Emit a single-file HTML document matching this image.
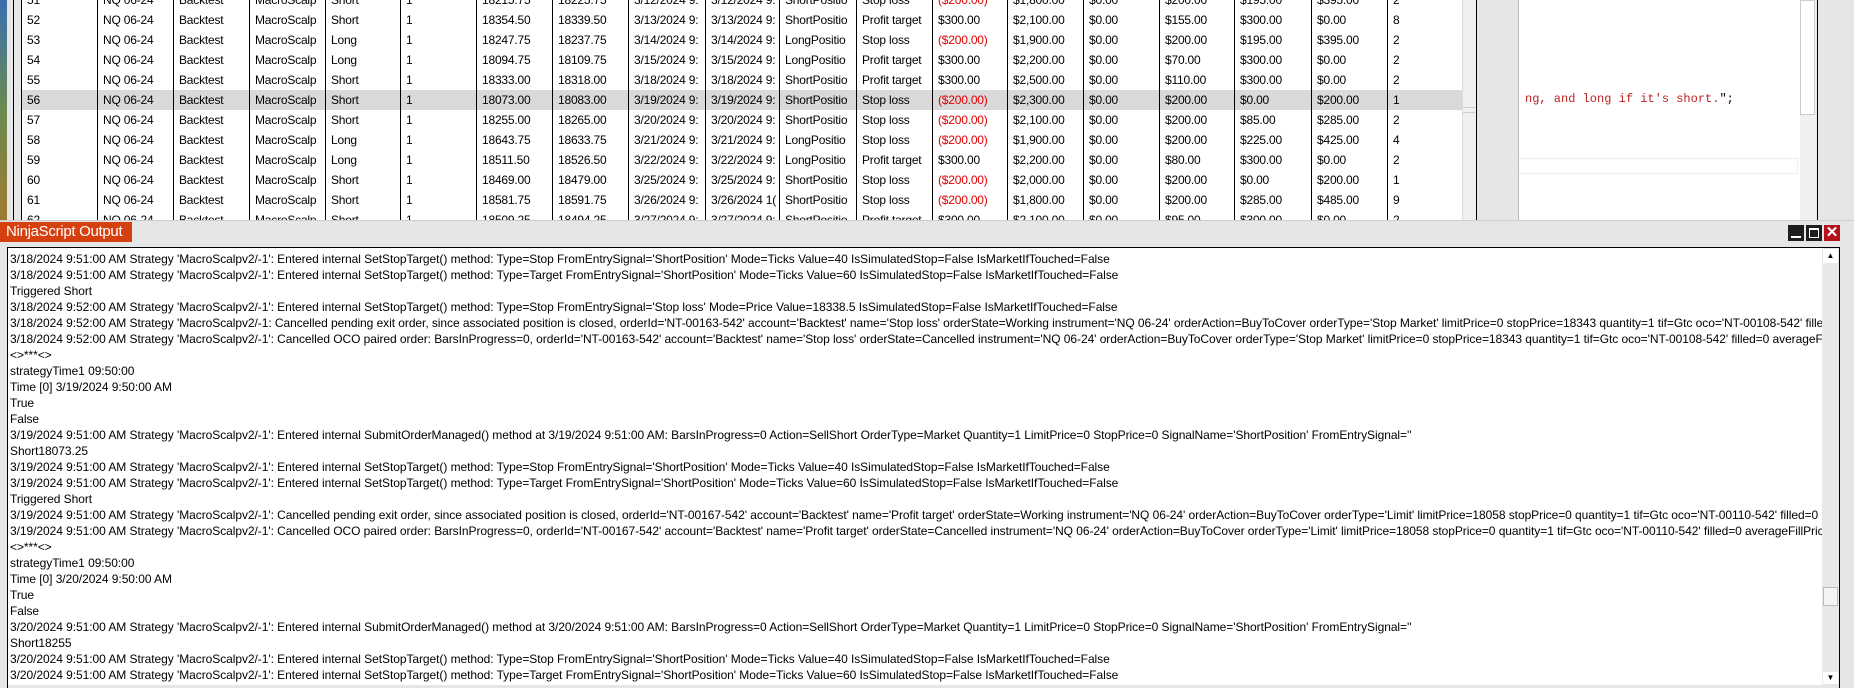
<!DOCTYPE html>
<html><head><meta charset="utf-8"><style>
*{margin:0;padding:0;box-sizing:border-box}
body{width:1854px;height:688px;overflow:hidden;background:#e6e6e6;font-family:"Liberation Sans",sans-serif;position:relative}
.abs{position:absolute}
#tbl{position:absolute;left:21px;top:0;width:1441px;height:220px;background:#fff;overflow:hidden}
.row{position:absolute;left:0;height:20px;width:1441px;font-size:12px;letter-spacing:-0.2px;line-height:20px;color:#000}
.row.sel{background:#d9d9d9}
.c{position:absolute;top:0;padding-left:6px;white-space:nowrap;overflow:hidden;height:20px}
.red{color:#e00000}
.vl{position:absolute;top:0;width:1px;height:220px;background:#000}
#out{position:absolute;left:7px;top:247px;width:1833px;height:441px;background:#fff;border:1px solid #000;border-bottom:none;overflow:hidden}
#txt{position:absolute;left:2px;top:3px;width:1812px;overflow:hidden;font-size:12px;letter-spacing:-0.06px;line-height:16px;white-space:pre;color:#000}
</style></head><body>
<div class="abs" style="left:0;top:0;width:7px;height:220px;background:linear-gradient(#3a6fb0,#6a8a50 50%,#a07a30)"></div>
<div class="abs" style="left:7px;top:0;width:7px;height:220px;background:#e6e6e6"></div>
<div class="abs" style="left:13px;top:0;width:1px;height:220px;background:#000"></div>
<div id="tbl"></div>
<div class="abs" style="left:1462px;top:0;width:14px;height:220px;background:#f0f0f0;border-left:1px solid #ddd"></div>
<div class="abs" style="left:1463px;top:107px;width:12px;height:6px;border-top:1px solid #ccc;border-bottom:1px solid #ccc"></div>
<div class="abs" style="left:1476px;top:0;width:1px;height:220px;background:#000"></div>
<div class="abs" style="left:1484px;top:0;width:35px;height:220px;background:#e6e6e6;border-right:1px solid #bbb"></div>
<div class="abs" style="left:1519px;top:0;width:281px;height:220px;background:#fff"></div>
<div class="abs" style="left:1525px;top:90px;font-family:'Liberation Mono',monospace;font-size:12px;line-height:18px;color:#b22;white-space:pre">ng, and long if it's short.<span style="color:#000">";</span></div>
<div class="abs" style="left:1519px;top:158px;width:279px;height:16px;border:1px solid #eee;border-left:none"></div>
<div class="abs" style="left:1800px;top:0;width:16px;height:220px;background:#f0f0f0"></div>
<div class="abs" style="left:1800px;top:0;width:15px;height:115px;background:#fff;border:1px solid #ccc"></div>
<div class="abs" style="left:1817px;top:0;width:1px;height:220px;background:#000"></div>
<div class="abs" style="left:0;top:220px;width:1854px;height:1px;background:#ccc"></div>
<div class="abs" style="left:0;top:222px;width:132px;height:20px;background:#d6400f;color:#fff;font-size:15px;line-height:20px;padding-left:6px;letter-spacing:-0.3px">NinjaScript Output</div>
<div class="abs" style="left:1788px;top:225px;width:16px;height:16px;background:#1e1e1e"><div class="abs" style="left:3px;top:11px;width:10px;height:2px;background:#fff"></div></div>
<div class="abs" style="left:1806px;top:225px;width:16px;height:16px;background:#1e1e1e"><div class="abs" style="left:3px;top:3px;width:10px;height:10px;border:1px solid #fff;border-top-width:2px"></div></div>
<div class="abs" style="left:1824px;top:225px;width:16px;height:16px;background:#b5121b;color:#fff;font-size:15px;font-weight:bold;line-height:16px;text-align:center">✕</div>
<div id="out"><div id="txt">3/18/2024 9:51:00 AM Strategy 'MacroScalpv2/-1': Entered internal SetStopTarget() method: Type=Stop FromEntrySignal='ShortPosition' Mode=Ticks Value=40 IsSimulatedStop=False IsMarketIfTouched=False
3/18/2024 9:51:00 AM Strategy 'MacroScalpv2/-1': Entered internal SetStopTarget() method: Type=Target FromEntrySignal='ShortPosition' Mode=Ticks Value=60 IsSimulatedStop=False IsMarketIfTouched=False
Triggered Short
3/18/2024 9:52:00 AM Strategy 'MacroScalpv2/-1': Entered internal SetStopTarget() method: Type=Stop FromEntrySignal='Stop loss' Mode=Price Value=18338.5 IsSimulatedStop=False IsMarketIfTouched=False
3/18/2024 9:52:00 AM Strategy 'MacroScalpv2/-1: Cancelled pending exit order, since associated position is closed, orderId='NT-00163-542' account='Backtest' name='Stop loss' orderState=Working instrument='NQ 06-24' orderAction=BuyToCover orderType='Stop Market' limitPrice=0 stopPrice=18343 quantity=1 tif=Gtc oco='NT-00108-542' filled=0
3/18/2024 9:52:00 AM Strategy 'MacroScalpv2/-1': Cancelled OCO paired order: BarsInProgress=0, orderId='NT-00163-542' account='Backtest' name='Stop loss' orderState=Cancelled instrument='NQ 06-24' orderAction=BuyToCover orderType='Stop Market' limitPrice=0 stopPrice=18343 quantity=1 tif=Gtc oco='NT-00108-542' filled=0 averageFillPrice=0
&lt;&gt;***&lt;&gt;
strategyTime1 09:50:00
Time [0] 3/19/2024 9:50:00 AM
True
False
3/19/2024 9:51:00 AM Strategy 'MacroScalpv2/-1': Entered internal SubmitOrderManaged() method at 3/19/2024 9:51:00 AM: BarsInProgress=0 Action=SellShort OrderType=Market Quantity=1 LimitPrice=0 StopPrice=0 SignalName='ShortPosition' FromEntrySignal=''
Short18073.25
3/19/2024 9:51:00 AM Strategy 'MacroScalpv2/-1': Entered internal SetStopTarget() method: Type=Stop FromEntrySignal='ShortPosition' Mode=Ticks Value=40 IsSimulatedStop=False IsMarketIfTouched=False
3/19/2024 9:51:00 AM Strategy 'MacroScalpv2/-1': Entered internal SetStopTarget() method: Type=Target FromEntrySignal='ShortPosition' Mode=Ticks Value=60 IsSimulatedStop=False IsMarketIfTouched=False
Triggered Short
3/19/2024 9:51:00 AM Strategy 'MacroScalpv2/-1': Cancelled pending exit order, since associated position is closed, orderId='NT-00167-542' account='Backtest' name='Profit target' orderState=Working instrument='NQ 06-24' orderAction=BuyToCover orderType='Limit' limitPrice=18058 stopPrice=0 quantity=1 tif=Gtc oco='NT-00110-542' filled=0
3/19/2024 9:51:00 AM Strategy 'MacroScalpv2/-1': Cancelled OCO paired order: BarsInProgress=0, orderId='NT-00167-542' account='Backtest' name='Profit target' orderState=Cancelled instrument='NQ 06-24' orderAction=BuyToCover orderType='Limit' limitPrice=18058 stopPrice=0 quantity=1 tif=Gtc oco='NT-00110-542' filled=0 averageFillPrice=0
&lt;&gt;***&lt;&gt;
strategyTime1 09:50:00
Time [0] 3/20/2024 9:50:00 AM
True
False
3/20/2024 9:51:00 AM Strategy 'MacroScalpv2/-1': Entered internal SubmitOrderManaged() method at 3/20/2024 9:51:00 AM: BarsInProgress=0 Action=SellShort OrderType=Market Quantity=1 LimitPrice=0 StopPrice=0 SignalName='ShortPosition' FromEntrySignal=''
Short18255
3/20/2024 9:51:00 AM Strategy 'MacroScalpv2/-1': Entered internal SetStopTarget() method: Type=Stop FromEntrySignal='ShortPosition' Mode=Ticks Value=40 IsSimulatedStop=False IsMarketIfTouched=False
3/20/2024 9:51:00 AM Strategy 'MacroScalpv2/-1': Entered internal SetStopTarget() method: Type=Target FromEntrySignal='ShortPosition' Mode=Ticks Value=60 IsSimulatedStop=False IsMarketIfTouched=False</div>
<div class="abs" style="left:1814px;top:0;width:17px;height:437px;background:#e8e8e8"></div>
<div class="abs" style="left:1815px;top:1px;width:15px;height:14px;background:#fff;font-size:8px;text-align:center;line-height:14px">▲</div>
<div class="abs" style="left:1815px;top:339px;width:15px;height:19px;background:#f4f4f4;border:1px solid #bbb"></div>
<div class="abs" style="left:1815px;top:424px;width:15px;height:12px;background:#fff;font-size:8px;text-align:center;line-height:12px">▼</div>
<div class="abs" style="left:0;top:437px;width:1833px;height:4px;background:#e6e6e6"></div>
</div>
<script>
var X=[0,76,152,228,304,379,455,531,607,684,758,835,911,986,1062,1138,1213,1290,1366];
var D=[
["51","NQ 06-24","Backtest","MacroScalp","Short","1","18215.75","18225.75","3/12/2024 9:","3/12/2024 9:","ShortPositio","Stop loss","($200.00)","$1,800.00","$0.00","$200.00","$195.00","$395.00","2"],
["52","NQ 06-24","Backtest","MacroScalp","Short","1","18354.50","18339.50","3/13/2024 9:","3/13/2024 9:","ShortPositio","Profit target","$300.00","$2,100.00","$0.00","$155.00","$300.00","$0.00","8"],
["53","NQ 06-24","Backtest","MacroScalp","Long","1","18247.75","18237.75","3/14/2024 9:","3/14/2024 9:","LongPositio","Stop loss","($200.00)","$1,900.00","$0.00","$200.00","$195.00","$395.00","2"],
["54","NQ 06-24","Backtest","MacroScalp","Long","1","18094.75","18109.75","3/15/2024 9:","3/15/2024 9:","LongPositio","Profit target","$300.00","$2,200.00","$0.00","$70.00","$300.00","$0.00","2"],
["55","NQ 06-24","Backtest","MacroScalp","Short","1","18333.00","18318.00","3/18/2024 9:","3/18/2024 9:","ShortPositio","Profit target","$300.00","$2,500.00","$0.00","$110.00","$300.00","$0.00","2"],
["56","NQ 06-24","Backtest","MacroScalp","Short","1","18073.00","18083.00","3/19/2024 9:","3/19/2024 9:","ShortPositio","Stop loss","($200.00)","$2,300.00","$0.00","$200.00","$0.00","$200.00","1"],
["57","NQ 06-24","Backtest","MacroScalp","Short","1","18255.00","18265.00","3/20/2024 9:","3/20/2024 9:","ShortPositio","Stop loss","($200.00)","$2,100.00","$0.00","$200.00","$85.00","$285.00","2"],
["58","NQ 06-24","Backtest","MacroScalp","Long","1","18643.75","18633.75","3/21/2024 9:","3/21/2024 9:","LongPositio","Stop loss","($200.00)","$1,900.00","$0.00","$200.00","$225.00","$425.00","4"],
["59","NQ 06-24","Backtest","MacroScalp","Long","1","18511.50","18526.50","3/22/2024 9:","3/22/2024 9:","LongPositio","Profit target","$300.00","$2,200.00","$0.00","$80.00","$300.00","$0.00","2"],
["60","NQ 06-24","Backtest","MacroScalp","Short","1","18469.00","18479.00","3/25/2024 9:","3/25/2024 9:","ShortPositio","Stop loss","($200.00)","$2,000.00","$0.00","$200.00","$0.00","$200.00","1"],
["61","NQ 06-24","Backtest","MacroScalp","Short","1","18581.75","18591.75","3/26/2024 9:","3/26/2024 1(","ShortPositio","Stop loss","($200.00)","$1,800.00","$0.00","$200.00","$285.00","$485.00","9"],
["62","NQ 06-24","Backtest","MacroScalp","Short","1","18509.25","18494.25","3/27/2024 9:","3/27/2024 9:","ShortPositio","Profit target","$300.00","$2,100.00","$0.00","$95.00","$300.00","$0.00","2"]];
var h="";
D.forEach(function(r,i){
 h+='<div class="row'+(r[0]=="56"?' sel':'')+'" style="top:'+(-10+i*20)+'px">';
 r.forEach(function(v,j){var w=(j<18?X[j+1]:1441)-X[j];
  h+='<div class="c'+(v.charAt(0)=="("?' red':'')+'" style="left:'+X[j]+'px;width:'+w+'px">'+v+'</div>';});
 h+='</div>';});
X.forEach(function(x){h+='<div class="vl" style="left:'+x+'px"></div>';});
document.getElementById('tbl').innerHTML=h;
</script>
</body></html>
